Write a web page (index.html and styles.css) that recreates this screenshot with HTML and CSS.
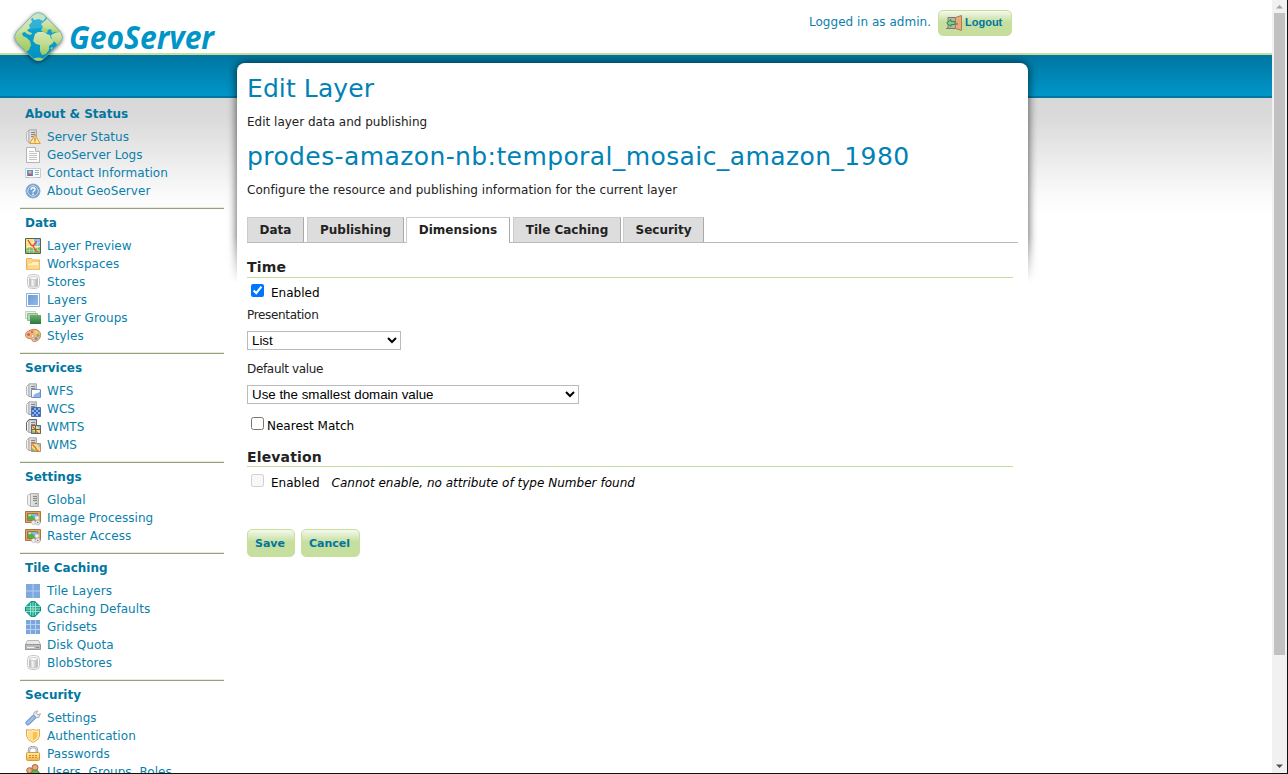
FILE: index.html
```html
<!DOCTYPE html>
<html lang="en">
<head>
<meta charset="utf-8">
<title>GeoServer: Edit Layer</title>
<link rel="stylesheet" href="styles.css">
</head>
<body>
<svg class="defs" width="0" height="0" aria-hidden="true">
  <defs>
    <linearGradient id="gSea" x1="0" y1="0" x2="0" y2="1"><stop offset="0" stop-color="#14acd9"/><stop offset="1" stop-color="#008fc0"/></linearGradient>
    <linearGradient id="gLand" x1="0" y1="0" x2="0" y2="1"><stop offset="0" stop-color="#d3e6b4"/><stop offset=".5" stop-color="#c2dc91"/><stop offset="1" stop-color="#9cc95c"/></linearGradient>
    <linearGradient id="gGrey" x1="0" x2="1"><stop offset="0" stop-color="#aaa"/><stop offset=".35" stop-color="#f4f4f4"/><stop offset="1" stop-color="#b0b0b0"/></linearGradient>
    <linearGradient id="gCase" x1="0" y1="0" x2="1" y2="0"><stop offset="0" stop-color="#e6e6e6"/><stop offset="1" stop-color="#c6c6c6"/></linearGradient>
    <linearGradient id="gBlue" x1="0" y1="0" x2="1" y2="1"><stop offset="0" stop-color="#6c9bd5"/><stop offset="1" stop-color="#94b9e5"/></linearGradient>
    <linearGradient id="gGold" x1="0" y1="0" x2="0" y2="1"><stop offset="0" stop-color="#fff0b0"/><stop offset="1" stop-color="#f4b334"/></linearGradient>
    <linearGradient id="gGreen" x1="0" y1="0" x2="0" y2="1"><stop offset="0" stop-color="#6fae76"/><stop offset="1" stop-color="#267a35"/></linearGradient>
    <symbol id="server" viewBox="0 0 16 16">
      <path d="M2.500 3.500 5.500 1.500v13l-3-2z" fill="#f1f1f1" stroke="#bcbcbc"/>
      <path d="M5.500 1.500h8v13h-8z" fill="url(#gCase)" stroke="#b0b0b0"/>
      <path d="M8 4.500h4M8 6.500h4M8 8.500h4" stroke="#868686"/><path d="M10 11.500h2" stroke="#49a02c"/>
    </symbol>
    <symbol id="serverL" viewBox="0 0 16 16">
      <path d="M1.500 3.500 4 1v12.500l-2.500-2z" fill="#eee" stroke="#b8b8b8"/>
      <path d="M4 .8h7.500v12.700H4z" fill="url(#gCase)" stroke="#aaa" stroke-linejoin="round"/>
      <path d="M6 3.500h4M6 5.500h4M6 7.500h4" stroke="#888"/>
    </symbol>
    <symbol id="status" viewBox="0 0 16 16"><use href="#serverL"/><path d="M10 5.800 15.300 14.500H4.700z" fill="#fdeaa0" stroke="#e39a3c" stroke-linejoin="round"/><path d="M10 8.500v3.200M10 12.500v1" stroke="#b9752a" stroke-width="1.200"/></symbol>
    <symbol id="page" viewBox="0 0 16 16"><path d="M1.500.5h9l4 4v11h-13z" fill="#fcfcfc" stroke="#b4b4b4"/><path d="M10.500.5v4h4" fill="#ececec" stroke="#b4b4b4"/><path d="M4 4.500h5M4 6.500h8M4 8.500h8M4 10.500h8M4 12.500h8" stroke="#c4c4c4"/></symbol>
    <symbol id="card" viewBox="0 0 16 16"><path d="M.5 3.500h15v9H.5z" fill="#fafafa" stroke="#c4ced4"/><path d="M2 5h6v6H2z" fill="#4d94d8"/><circle cx="5" cy="7" r="1.600" fill="#f4b17b"/><path d="M3 11q2-4 4 0z" fill="#cc473d"/><path d="M10 5.500h4M10 7.500h4M10 9.500h4" stroke="#a3b0b6"/><path d="M1 12.500h3m8 0h3" stroke="#a9bbca"/></symbol>
    <symbol id="help" viewBox="0 0 16 16"><circle cx="8" cy="8" r="7" fill="#5a8dc4" stroke="#8fb0d2"/><circle cx="8" cy="8" r="5.300" fill="#6f9fce" stroke="#dce9f6"/><path d="M6 6.700q0-2 2-2t2 1.700q0 1-1 1.500T8 9.500M8 10.500v1.500" fill="none" stroke="#fff" stroke-width="1.400"/></symbol>
    <symbol id="map" viewBox="0 0 16 16"><path d="M.5.5h15v15H.5z" fill="#fbe17e" stroke="#55664f"/><path d="M9 1h6v7H9z" fill="#8fb9e8"/><path d="M1 11l4-2 4 2 6-2v6H1z" fill="#7fbd6b"/><path d="M4.500 1v14M8.500 1v14M12.500 1v14M1 4.500h14M1 8.500h14M1 12.500h14" stroke="#fff" stroke-opacity=".3"/><path d="M3 2l3 5 2 1 3 5 2 1M12 3l-4 5" fill="none" stroke="#e04a36" stroke-width="1.300"/></symbol>
    <symbol id="folder" viewBox="0 0 16 16"><path d="M1.500 13.500v-11h5l1 1.500h7v9.500z" fill="#fbd98d" stroke="#eeb155"/><path d="M2.500 13v-6h4l1-1.500h6.500V13z" fill="#fff0bd" stroke="#f5cd7c"/><path d="M3 9h11v4H3z" fill="#fbdc8f"/></symbol>
    <symbol id="store" viewBox="0 0 16 16"><rect x="2.500" y=".5" width="12" height="14" rx="4" fill="#f8f8f8" stroke="#c8c8c8"/><path d="M4.500 4v7.500c0 2 8 2 8 0V4z" fill="url(#gGrey)" stroke="#b8b8b8" stroke-width=".7"/><ellipse cx="8.500" cy="4" rx="4" ry="1.600" fill="#f7f7f7" stroke="#c0c0c0" stroke-width=".7"/></symbol>
    <symbol id="layer" viewBox="0 0 16 16"><path d="M1.500 1.500h13v13h-13z" fill="#fff" stroke="#8db0dc"/><path d="M3 3h10v10H3z" fill="url(#gBlue)"/></symbol>
    <symbol id="group" viewBox="0 0 16 16"><path d="M.5 1.500h10v7H.5z" fill="#e9f3e8" stroke="#bcd6bc"/><path d="M2.500 3.500h10v7h-10z" fill="#b3d4b3" stroke="#8dba8f"/><path d="M5 5h11v9H5z" fill="url(#gGreen)"/></symbol>
    <symbol id="palette" viewBox="0 0 16 16"><path d="M6 2c5-2 10 1 9.500 5.500C15 12 11 14 8.500 13.500S8 10.500 5 10.500.5 9 .6 6.500 3 3 6 2z" fill="#efba87" stroke="#c67f56"/><circle cx="7" cy="4" r="1.400" fill="#ee6b55"/><circle cx="11" cy="4.200" r="1.400" fill="#f7d64e"/><circle cx="13" cy="7.500" r="1.400" fill="#78b653"/><circle cx="11" cy="10.500" r="1.500" fill="#5e9ad0"/><circle cx="3.600" cy="6.500" r="1.500" fill="#dc604d"/><circle cx="7.500" cy="8" r="1.300" fill="#fff" stroke="#c67f56" stroke-width=".6"/></symbol>
    <symbol id="wfs" viewBox="0 0 16 16"><use href="#serverL"/><path d="M6.500 6.500h9v8h-9z" fill="#fff" stroke="#6c90c4"/><path d="M8 14q1-3.500 4-4t3-3v7z" fill="#8fb4e3"/></symbol>
    <symbol id="wcs" viewBox="0 0 16 16"><use href="#serverL"/><path d="M6.500 6.500h9v9h-9z" fill="#8fb5ed" stroke="#4a71b3"/><path d="M7 7h2v2H7zm4 0h2v2h-2zM9 9h2v2H9zm4 0h2v2h-2zM7 11h2v2H7zm4 0h2v2h-2zM9 13h2v2H9zm4 0h2v2h-2z" fill="#3b66b2"/></symbol>
    <symbol id="wms" viewBox="0 0 16 16"><use href="#serverL"/><path d="M6.500 6.500h9v8h-9z" fill="#f9de74" stroke="#bf8a68"/><path d="M12 7h3v4z" fill="#8abbe9"/><path d="M7 14v-3l4 3z" fill="#80bb73"/><path d="M7.500 7.500l3 3 1 2.500 2 1" fill="none" stroke="#e05f46" stroke-width="1.300"/></symbol>
    <symbol id="wmts" viewBox="0 0 16 16"><use href="#wms"/><path d="M1.500 11.500v-8l2.500-3h7.500V6M6.500 6.500h9v8h-9zM10.500 6.500v8M6.500 10.500h9" fill="none" stroke="#666"/></symbol>
    <symbol id="image" viewBox="0 0 16 16"><path d="M.5 1.500h15v11H.5z" fill="#dba765" stroke="#ab733b"/><path d="M2.500 3.500h10v7h-10z" fill="#71bfe8" stroke="#a8703a"/><path d="M3 10V7l3-2 3 2 3 3z" fill="#57ad48"/><circle cx="5" cy="5.300" r="1" fill="#ffe66c"/><circle cx="12" cy="8" r="2.200" fill="#f0f0f0" stroke="#b4b4b4" stroke-width=".7"/><circle cx="8.500" cy="12.500" r="2" fill="#f0f0f0" stroke="#b4b4b4" stroke-width=".7"/><circle cx="12.700" cy="12.500" r="2.500" fill="#e8e8e8" stroke="#b0b0b0" stroke-width=".7"/><circle cx="12.700" cy="12.500" r=".8" fill="#b86c42"/></symbol>
    <symbol id="tiles" viewBox="0 0 16 16"><path d="M1 1h14v14H1z" fill="#b3cff0"/><path d="M1 1h6.500v6.500H1zM8.500 1H15v6.500H8.500zM1 8.500h6.500V15H1zM8.500 8.500H15V15H8.500z" fill="#7fa9de"/></symbol>
    <symbol id="globe" viewBox="0 0 16 16"><path d="M6 .6h4L15.500 6v4L10 15.400H6L.5 10V6z" fill="#19a994" stroke="#07897f"/><path d="M5.500 2v12M8 1v14M10.500 2v12M1 5.500h14M1 8h14M1 10.500h14" fill="none" stroke="#b8ecd4" stroke-width=".8"/></symbol>
    <symbol id="grid" viewBox="0 0 16 16"><path d="M1 1h14v14H1z" fill="#7ba6dc"/><path d="M5.500 1v14M10.500 1v14M1 5.500h14M1 10.500h14" stroke="#b7d2f1"/></symbol>
    <symbol id="disk" viewBox="0 0 16 16"><path d="M2.500 3.500h11l2 4v5H.5v-5z" fill="#e9e9e9" stroke="#b8b8b8"/><path d="M.5 7.500h15v5H.5z" fill="#bcbcbc" stroke="#989898"/><path d="M2 10.500h7" stroke="#f2f2f2"/><path d="M11 10.500h3" stroke="#888"/></symbol>
    <symbol id="wrench" viewBox="0 0 16 16"><path d="M8 7.500 9 2.500 12.500.7 11.500 3.500l1.500 1.300L15.400 3.500 14 7.300 10 8z" fill="#e9e9e9" stroke="#a5a5a5" stroke-width=".9"/><path d="M8.500 7.500 2.800 13" stroke="#6a92c9" stroke-width="4.600" stroke-linecap="round"/><path d="M8.500 7.500 2.800 13" stroke="#9dbfe8" stroke-width="2.800" stroke-linecap="round"/></symbol>
    <symbol id="shield" viewBox="0 0 16 16"><path d="M8 1.500Q11 3 14.500 1.500V8q-.5 4-6.500 6.500Q2 12 1.500 8V1.500Q5 3 8 1.500z" fill="#ffe9b5" stroke="#eaa945"/><path d="M8 3Q11 4 13 3.500V8q-.5 3-5 5Q3.500 11 3 8V3.500Q5 4 8 3z" fill="#fbc14d" stroke="#fff3cf" stroke-width=".8"/><path d="M8 3v10Q3.500 11 3 8V3.500Q5 4 8 3z" fill="#fde08f"/></symbol>
    <symbol id="lock" viewBox="0 0 16 16"><path d="M4 8V4.500a4 3.500 0 0 1 8 0V8" fill="none" stroke="#999" stroke-width="2.500"/><path d="M4 8V4.500a4 3.500 0 0 1 8 0V8" fill="none" stroke="#e4e4e4"/><rect x="1.500" y="6.500" width="13" height="8" rx="1" fill="url(#gGold)" stroke="#d8993d"/><path d="M4 9.500h2m1 0h2m1 0h2M4 11.500h2m1 0h2m1 0h2" stroke="#cd8b35"/></symbol>
    <symbol id="users" viewBox="0 0 16 16"><circle cx="10" cy="3.500" r="3" fill="#e8ac79" stroke="#a4643c"/><path d="M6 11q0-5 4-5t5 5z" fill="#6ab44e" stroke="#428b31"/><circle cx="4.500" cy="6.500" r="2.800" fill="#e8ac79" stroke="#a4643c"/><path d="M.5 15q0-5 4-5t4 5z" fill="#d65542"/></symbol>
  </defs>
</svg>

<div class="window">
<div class="page">
  <header class="header">
    <svg class="logo" width="210" height="60" viewBox="0 0 210 60" role="img" aria-label="GeoServer">
      <clipPath id="gem"><path d="M23 5q5.500-4.500 11 0L50 21.500q4.500 5.500 0 11L34 48.500q-5.500 4.500-11 0L7 32.500q-4.500-5.500 0-11z"/></clipPath>
      <path class="gem-shadow" d="M23 5q5.500-4.500 11 0L50 21.500q4.500 5.500 0 11L34 48.500q-5.500 4.500-11 0L7 32.500q-4.500-5.500 0-11z"/>
      <g clip-path="url(#gem)">
        <path d="M0 0h58v54H0z" fill="url(#gSea)"/>
        <path d="M4 18 14 10 23 3l1 3-3 3 1 3-3 3 1 3-3 2 2 2 3 1-1 2-4-1-2-2-3 1 1 3 4 2 3 3 1 4-2 5-4 3-10-9z" fill="url(#gLand)"/>
        <path d="M22 2h13l1 5-3 4-4-2-5 1-2-3z" fill="#bfe0bd"/>
        <path d="M31 14l5-4 2-4 8 9 5 7-2 2-4-2-3 1-1-4-3 1-1 3-4-1-2-2 2-3z" fill="url(#gLand)"/>
        <path d="M25 24l3-2 6 0 3 2 3 1 1 4 3 1-1 3-4 3 0 4-3 4-4 1-2-4 0-6-4-1-3-3z" fill="url(#gLand)"/>
        <path d="M41 25l4-2 6-1 4 6-7 8-3-4-3-1z" fill="url(#gLand)"/>
        <path d="M23 49q5-3 11 0l-4 4h-4zM40 38l3-1-1 3z" fill="#a7d166"/>
        <path d="M6 24Q19 6 28 3q12 6 21 19Q30 13 6 24z" fill="#fff" opacity=".15"/>
      </g>
      <path d="M23 5q5.500-4.500 11 0L50 21.500q4.500 5.500 0 11L34 48.500q-5.500 4.500-11 0L7 32.500q-4.500-5.500 0-11z" fill="none" stroke="#8fb9ad" stroke-width=".8"/>
      <text class="logo-text" x="59" y="38.700" textLength="145" lengthAdjust="spacingAndGlyphs">GeoServer</text>
    </svg>
    <div class="session">
      <span>Logged in as admin.</span>
      <button class="button logout" type="button">
        <svg width="16" height="16" viewBox="0 0 16 16"><path d="M2 2.500h9v11H2z" fill="#b4b4b4" stroke="#777"/><path d="M0 13.500h10" stroke="#777"/><path d="M9.500 2.500 15.500.5v15l-6-2z" fill="#e2ac80" stroke="#b97a50"/><path d="M11 8v2" stroke="#8f5a30"/><path d="M.7 8 5 4.500v2h4v3H5v2z" fill="#82cd86" stroke="#388a45"/></svg>Logout
      </button>
    </div>
  </header>

  <div class="columns">
    <nav class="sidebar">
      <section class="menu"><h3>About &amp; Status</h3><ul>
        <li><svg><use href="#status"/></svg><a>Server Status</a></li>
        <li><svg><use href="#page"/></svg><a>GeoServer Logs</a></li>
        <li><svg><use href="#card"/></svg><a>Contact Information</a></li>
        <li><svg><use href="#help"/></svg><a>About GeoServer</a></li></ul></section>
      <section class="menu"><h3>Data</h3><ul>
        <li><svg><use href="#map"/></svg><a>Layer Preview</a></li>
        <li><svg><use href="#folder"/></svg><a>Workspaces</a></li>
        <li><svg><use href="#store"/></svg><a>Stores</a></li>
        <li><svg><use href="#layer"/></svg><a>Layers</a></li>
        <li><svg><use href="#group"/></svg><a>Layer Groups</a></li>
        <li><svg><use href="#palette"/></svg><a>Styles</a></li></ul></section>
      <section class="menu"><h3>Services</h3><ul>
        <li><svg><use href="#wfs"/></svg><a>WFS</a></li>
        <li><svg><use href="#wcs"/></svg><a>WCS</a></li>
        <li><svg><use href="#wmts"/></svg><a>WMTS</a></li>
        <li><svg><use href="#wms"/></svg><a>WMS</a></li></ul></section>
      <section class="menu"><h3>Settings</h3><ul>
        <li><svg><use href="#server"/></svg><a>Global</a></li>
        <li><svg><use href="#image"/></svg><a>Image Processing</a></li>
        <li><svg><use href="#image"/></svg><a>Raster Access</a></li></ul></section>
      <section class="menu"><h3>Tile Caching</h3><ul>
        <li><svg><use href="#tiles"/></svg><a>Tile Layers</a></li>
        <li><svg><use href="#globe"/></svg><a>Caching Defaults</a></li>
        <li><svg><use href="#grid"/></svg><a>Gridsets</a></li>
        <li><svg><use href="#disk"/></svg><a>Disk Quota</a></li>
        <li><svg><use href="#store"/></svg><a>BlobStores</a></li></ul></section>
      <section class="menu"><h3>Security</h3><ul>
        <li><svg><use href="#wrench"/></svg><a>Settings</a></li>
        <li><svg><use href="#shield"/></svg><a>Authentication</a></li>
        <li><svg><use href="#lock"/></svg><a>Passwords</a></li>
        <li><svg><use href="#users"/></svg><a>Users, Groups, Roles</a></li></ul></section>
    </nav>

    <main class="panel">
      <div class="panel-shadow"><div class="panel-shadow-shape"></div></div>
      <div class="panel-body">
        <h1>Edit Layer</h1>
        <p>Edit layer data and publishing</p>
        <h1 class="layer-name">prodes-amazon-nb:temporal_mosaic_amazon_1980</h1>
        <p class="hint">Configure the resource and publishing information for the current layer</p>
        <div class="tabs">
          <a class="tab tab-data">Data</a>
          <a class="tab tab-publishing">Publishing</a>
          <a class="tab tab-dimensions active">Dimensions</a>
          <a class="tab tab-caching">Tile Caching</a>
          <a class="tab tab-security">Security</a>
        </div>
        <form class="dimensions">
          <h2>Time</h2>
          <label class="check"><input type="checkbox" checked><span>Enabled</span></label>
          <label class="caption">Presentation</label>
          <select class="select-short"><option>List</option></select>
          <label class="caption">Default value</label>
          <select class="select-long"><option>Use the smallest domain value</option></select>
          <label class="check tight"><input type="checkbox"><span>Nearest Match</span></label>
          <h2 class="elevation">Elevation</h2>
          <label class="check low"><input type="checkbox" disabled><span>Enabled</span><em>Cannot enable, no attribute of type Number found</em></label>
          <div class="actions">
            <button class="button save" type="button">Save</button>
            <button class="button cancel" type="button">Cancel</button>
          </div>
        </form>
      </div>
    </main>
  </div>
</div>
<div class="scrollbar">
  <svg width="15" height="13" viewBox="0 0 15 13"><path d="M4 8.500h7L7.500 5z" fill="#a3a3a3"/></svg>
  <div class="thumb"></div>
  <svg width="15" height="14" viewBox="0 0 15 14"><path d="M4 5.500h7L7.500 9z" fill="#505050"/></svg>
</div>
</div>
</body>
</html>
```

FILE: styles.css
```css
* { box-sizing: border-box; }

body {
  margin: 0;
  font: 12px/18px "DejaVu Sans", Verdana, sans-serif;
  color: #222;
  background: #fff;
}

h1, h2, h3, p, ul { margin: 0; padding: 0; }
ul { list-style: none; }

.defs { position: absolute; }

.window {
  display: flex;
  height: 774px;
  overflow: hidden;
  border-right: 1px solid #111;
  border-bottom: 1px solid #111;
}

.page {
  flex: 1;
  overflow: hidden;
  background:
    linear-gradient(#c6df9b, #c6df9b) 0 53px / 100% 2px no-repeat,
    linear-gradient(#0076a1, #0096c8) 0 55px / 100% 41px no-repeat,
    linear-gradient(#0076a1, #0076a1) 0 96px / 100% 2px no-repeat,
    linear-gradient(#d8d8d8, #dadada 20px, #fafafa 96px, #fff 118px) 0 98px / 100% 118px no-repeat,
    #fff;
}

/* Header */
.header {
  display: flex;
  justify-content: space-between;
  height: 63px;
  padding-left: 10px;
}
.logo { margin-top: 10px; flex: none; overflow: visible; }
.gem-shadow { filter: drop-shadow(0 1px 2px rgba(0, 0, 0, .65)); fill: #0090c0; }
.logo-text { font: italic bold 32px "Open Sans", sans-serif; fill: #0095c6; }
.session {
  display: flex;
  align-items: flex-start;
  gap: 7px;
  margin-right: 260px;
  padding-top: 10px;
  color: #0a7fab;
}
.session span { padding-top: 3px; letter-spacing: .03px; }

.button {
  margin: 0;
  padding: 0;
  border: 1px solid #c6df9b;
  border-radius: 5px;
  background: linear-gradient(#f5f9ee, #c6df9f 45%, #c6df9f);
  color: #0076a1;
  font: bold 11px/18px "DejaVu Sans", sans-serif;
}
.logout {
  display: flex;
  align-items: center;
  gap: 3px;
  width: 74px;
  height: 26px;
  padding: 0 0 2px 7px;
  font-family: "Liberation Sans", sans-serif;
}
.logout svg { position: relative; top: 1px; }

/* Side menu */
.columns { display: flex; height: 711px; }
.sidebar { flex: none; width: 204px; margin: 37px 13px 0 20px; }
.menu {
  padding: 5px 5px 9px;
  background: linear-gradient(#e4eed8 50%, #95a083 50%) 0 100% / 100% 2px no-repeat;
}
.menu h3 { margin-bottom: 5px; font-size: 12px; line-height: 18px; color: #0076a1; }
.menu li { display: flex; align-items: center; gap: 6px; height: 18px; color: #0a7fab; letter-spacing: .05px; }
.menu li svg { flex: none; width: 16px; height: 16px; }

/* Main panel */
.panel { position: relative; width: 791px; }
.panel-shadow {
  position: absolute;
  inset: -12px -12px auto;
  height: 232px;
  padding: 12px 12px 0;
  -webkit-mask-image: linear-gradient(#000 185px, transparent 232px);
  mask-image: linear-gradient(#000 185px, transparent 232px);
}
.panel-shadow-shape {
  height: 240px;
  border-radius: 8px 8px 0 0;
  box-shadow: 0 0 8px 1px rgba(0, 0, 0, .6);
}
.panel-body {
  position: relative;
  height: 711px;
  padding: 10px;
  border-radius: 8px 8px 0 0;
  background: #fff;
}
h1 { padding-top: 1px; font-size: 25px; line-height: 29px; font-weight: normal; letter-spacing: .1px; color: #0082b6; }
.layer-name { letter-spacing: .4px; }
.panel-body p { margin: 10px 0; }
.panel-body .hint { letter-spacing: .04px; }

.tabs {
  display: flex;
  height: 26px;
  margin-top: 18px;
  border-bottom: 1px solid #bbb;
}
.tab {
  height: 25px;
  border: 1px solid #ccc;
  border-right-color: #aaa;
  border-bottom: 0;
  background: #ddd;
  font-weight: bold;
  line-height: 24px;
  text-align: center;
}
.tab-data { width: 57px; margin-right: 3px; }
.tab-publishing { width: 97px; margin-right: 2px; }
.tab-dimensions { width: 104px; margin-right: 3px; }
.tab-caching { width: 108px; margin-right: 2px; }
.tab-security { width: 81px; }
.tab.active { height: 26px; background: #fff; }

.dimensions { display: flex; flex-direction: column; align-items: flex-start; padding: 15px 5px 0 0; }
.dimensions h2 {
  width: 100%;
  height: 20px;
  border-bottom: 1px solid #c6df9b;
  font-size: 14px;
  line-height: 19px;
  letter-spacing: .15px;
}
.check { display: flex; height: 28px; padding: 6px 0 0 4px; color: #000; }
.check input { width: 13px; height: 13px; margin: 0 7px 0 0; }
.check em { margin-left: 12px; letter-spacing: .02px; }
.caption { margin-bottom: 7px; letter-spacing: -.33px; }
select {
  height: 19px;
  margin: 0;
  padding: 0;
  border: 1px solid #bbb;
  background: #fff;
  color: #000;
  font: 13.333px "Liberation Sans", sans-serif;
}
.select-short { width: 154px; margin-bottom: 10px; }
.select-long { width: 332px; }
.check.tight { margin-top: 7px; }
.check.tight input { margin-right: 3px; }
.check.low { padding-top: 7px; }
.dimensions .elevation { margin-top: 8px; line-height: 21px; }
.actions { display: flex; gap: 6px; margin-top: 34px; }
.save, .cancel { height: 28px; padding: 1px 2px 0 0; }
.save { width: 48px; }
.cancel { width: 59px; }

/* Scrollbar */
.scrollbar {
  display: flex;
  flex-direction: column;
  width: 15px;
  background: #f1f1f1;
}
.scrollbar svg { flex: none; }
.thumb { height: 642px; margin: 0 2px auto; background: #c1c1c1; }
```
